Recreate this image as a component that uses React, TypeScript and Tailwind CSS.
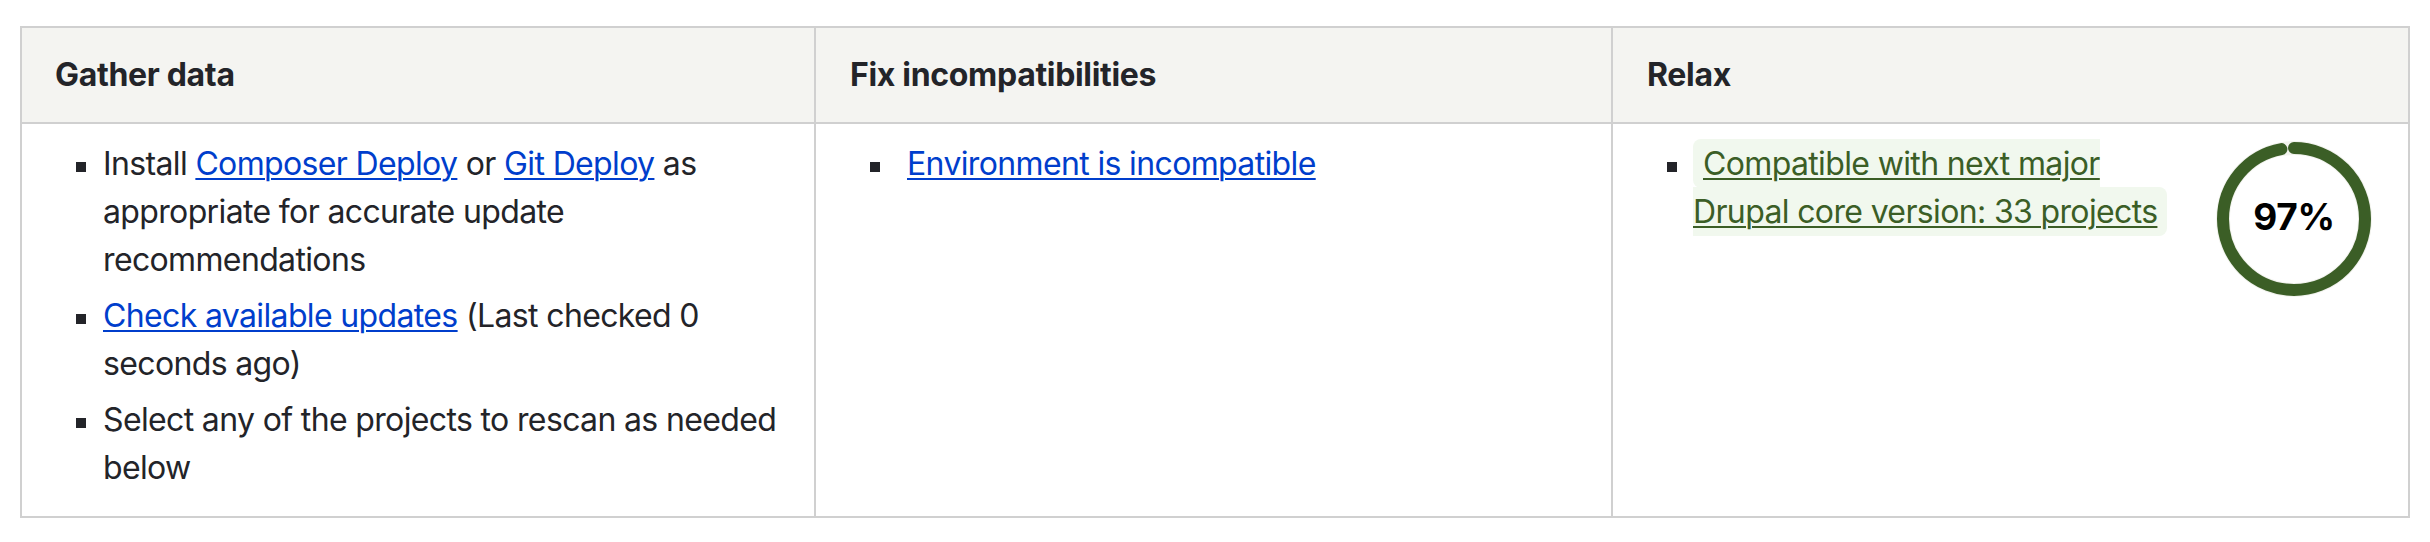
import React from "react";

const RING_R = 71;
const RING_C = 2 * Math.PI * RING_R;

function Bullet({ width }: { width: string }) {
  return (
    <span className={`shrink-0 ${width}`}>
      <span className="block w-[10px] h-[10px] mt-[22px] bg-[#232429]" />
    </span>
  );
}

function Ring({ percent }: { percent: number }) {
  return (
    <div className="relative w-[156px] h-[156px] shrink-0">
      <svg width="156" height="156" viewBox="0 0 156 156">
        <circle cx="78" cy="78" r={RING_R} fill="none" stroke="#f2f3ee" strokeWidth="14" />
        <circle
          cx="78"
          cy="78"
          r={RING_R}
          fill="none"
          stroke="#3b5e26"
          strokeWidth="12"
          strokeLinecap="round"
          strokeDasharray={`${(percent / 100) * RING_C} ${RING_C}`}
          transform="rotate(-90 78 78)"
        />
      </svg>
      <div className="absolute inset-0 pb-[4px] flex items-center justify-center text-[37px] font-bold text-black tracking-[-0.01em]">
        {percent}%
      </div>
    </div>
  );
}

export default function App() {
  const link = "text-[#003ecc] underline decoration-2 underline-offset-[3px]";

  return (
    <div className="min-h-screen bg-white pt-[26px] px-[20px] text-[#232429] font-['Inter','Noto_Sans',sans-serif] text-[32px] leading-[48px] tracking-[-0.02em]">
      <div className="grid grid-cols-[792px_797px_1fr] border-2 border-[#d0d0d0]">
        {/* header */}
        <div className="h-[96px] flex items-center pl-[33px] bg-[#f4f4f1] border-b-2 border-[#d0d0d0] font-bold tracking-[-0.01em]">
          Gather data
        </div>
        <div className="h-[96px] flex items-center pl-[34px] bg-[#f4f4f1] border-b-2 border-l-2 border-[#d0d0d0] font-bold tracking-[-0.01em]">
          Fix incompatibilities
        </div>
        <div className="h-[96px] flex items-center pl-[34px] bg-[#f4f4f1] border-b-2 border-l-2 border-[#d0d0d0] font-bold tracking-[-0.01em]">
          Relax
        </div>

        {/* body */}
        <div className="pt-[16px] pb-[16px] pl-[54px] pr-[32px]">
          <ul className="flex flex-col">
            <li className="flex mb-[8px]">
              <Bullet width="w-[27px]" />
              <span>
                Install <a className={link} href="#">Composer Deploy</a> or{" "}
                <a className={link} href="#">Git Deploy</a> as appropriate for accurate update
                recommendations
              </span>
            </li>
            <li className="flex mb-[8px]">
              <Bullet width="w-[27px]" />
              <span>
                <a className={link} href="#">Check available updates</a> (Last checked 0 seconds ago)
              </span>
            </li>
            <li className="flex mb-[8px]">
              <Bullet width="w-[27px]" />
              <span>Select any of the projects to rescan as needed below</span>
            </li>
          </ul>
        </div>
        <div className="pt-[16px] pl-[54px] pr-[32px] border-l-2 border-[#d0d0d0]">
          <ul>
            <li className="flex">
              <Bullet width="w-[37px]" />
              <a className={link} href="#">Environment is incompatible</a>
            </li>
          </ul>
        </div>
        <div className="pt-[16px] pl-[54px] pr-[36px] border-l-2 border-[#d0d0d0] flex items-start">
          <ul className="flex-1">
            <li className="flex">
              <Bullet width="w-[26px]" />
              <span className="w-[500px]">
                <a
                  href="#"
                  className="bg-[#f1f8ee] text-[#3b5e26] underline decoration-2 underline-offset-[3px] px-[10px] py-[5px] rounded-[8px]"
                >
                  Compatible with next major Drupal core version: 33 projects
                </a>
              </span>
            </li>
          </ul>
          <div className="mt-[1px]">
            <Ring percent={97} />
          </div>
        </div>
      </div>
    </div>
  );
}
